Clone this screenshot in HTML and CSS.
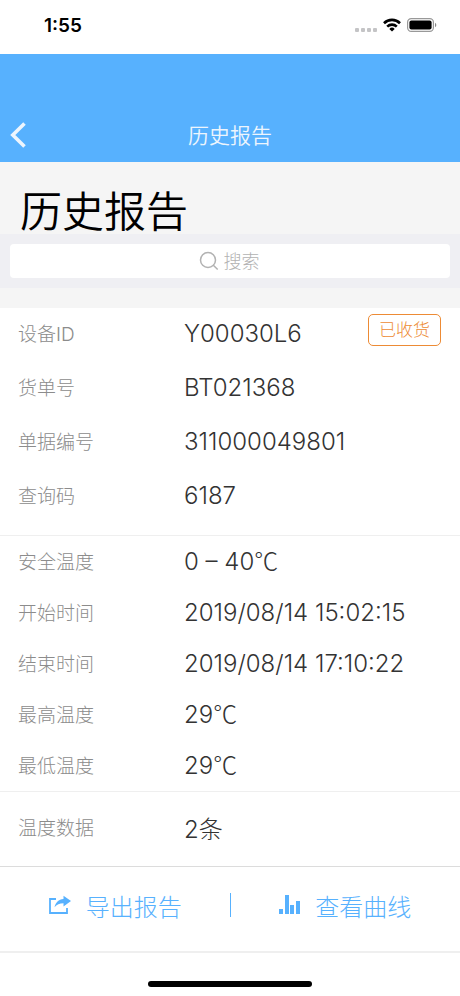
FILE: index.html
```
<!DOCTYPE html>
<html lang="zh-CN">
<head>
  <meta charset="UTF-8">
  <meta name="viewport" content="width=device-width, initial-scale=1.0">
  <link rel="stylesheet" href="styles.css">
  <title>历史报告</title>
</head>
<body>
  <div class="page">
    <div class="status-bar">
      <span class="time">1:55</span>
      <div class="status-icons">
        <svg width="22" height="16" viewBox="0 0 22 16" fill="#c4c4c6">
          <rect x="0" y="11" width="4" height="4" rx="1"/>
          <rect x="6" y="11" width="4" height="4" rx="1"/>
          <rect x="12" y="11" width="4" height="4" rx="1"/>
          <rect x="18" y="11" width="4" height="4" rx="1"/>
        </svg>
        <svg width="18" height="14" viewBox="0 0 18 14" fill="none" stroke="#000" stroke-width="2.6">
          <path d="M1 5.2a11.4 11.4 0 0 1 16 0"/>
          <path d="M4.2 8.6a6.9 6.9 0 0 1 9.6 0"/>
          <path d="M9 13.6L6.3 10.9a3.8 3.8 0 0 1 5.4 0z" fill="#000" stroke="none"/>
        </svg>
        <svg width="30" height="14" viewBox="0 0 30 14">
          <rect x=".6" y=".6" width="25.8" height="12.8" rx="3.6" fill="none" stroke="#999" stroke-width="1.2"/>
          <rect x="2.4" y="2.4" width="22.2" height="9.2" rx="2" fill="#000"/>
          <path d="M28 4.8c1.8.8 1.8 3.6 0 4.4z" fill="#888"/>
        </svg>
      </div>
    </div>

    <header class="nav-bar">
      <button type="button" class="back" aria-label="返回">
        <svg width="16" height="26" viewBox="0 0 16 26" fill="none" stroke="#edf5fd" stroke-width="3.6">
          <path d="M14.5 1.5L2.8 13l11.7 11.5"/>
        </svg>
      </button>
      <span class="nav-title">历史报告</span>
    </header>

    <main>
      <h1>历史报告</h1>

      <div class="search">
        <label class="search-box">
          <svg width="20" height="20" viewBox="0 0 20 20" fill="none" stroke="#b2b2b2" stroke-width="1.5">
            <circle cx="9" cy="9" r="7.5"/>
            <path d="M14.3 14.3l4.4 4.2"/>
          </svg>
          <input type="text" placeholder="搜索" aria-label="搜索">
        </label>
      </div>

      <section class="group device">
        <dl>
          <div class="item"><dt>设备ID</dt><dd>Y00030L6</dd></div>
          <div class="item"><dt>货单号</dt><dd>BT021368</dd></div>
          <div class="item"><dt>单据编号</dt><dd>311000049801</dd></div>
          <div class="item"><dt>查询码</dt><dd>6187</dd></div>
        </dl>
        <span class="tag">已收货</span>
      </section>

      <section class="group record">
        <dl>
          <div class="item"><dt>安全温度</dt><dd>0 – 40<span class="unit">℃</span></dd></div>
          <div class="item"><dt>开始时间</dt><dd>2019/08/14 15:02:15</dd></div>
          <div class="item"><dt>结束时间</dt><dd>2019/08/14 17:10:22</dd></div>
          <div class="item"><dt>最高温度</dt><dd>29<span class="unit">℃</span></dd></div>
          <div class="item"><dt>最低温度</dt><dd>29<span class="unit">℃</span></dd></div>
        </dl>
      </section>

      <section class="group total">
        <dl>
          <div class="item"><dt>温度数据</dt><dd>2条</dd></div>
        </dl>
      </section>
    </main>

    <div class="actions">
      <button type="button">
        <svg width="24" height="20" viewBox="0 0 24 20">
          <path d="M8 4H2v14h17v-5" fill="none" stroke="#57b1fe" stroke-width="1.8"/>
          <path d="M15.500 .8L23 6l-7.500 5.400V8.300C11.500 8.300 8.700 9.500 6.500 12.300 7.500 7.500 10.500 4.300 15.500 4z" fill="#57b1fe"/>
        </svg>
        导出报告
      </button>
      <span class="divider"></span>
      <button type="button">
        <svg width="22" height="20" viewBox="0 0 22 20" fill="#57b1fe">
          <rect x="0" y="14" width="4" height="5"/>
          <rect x="6" y="0" width="4" height="19"/>
          <rect x="11" y="10" width="4" height="9"/>
          <rect x="17" y="6" width="4" height="13"/>
        </svg>
        查看曲线
      </button>
    </div>

    <div class="home">
      <span class="home-bar"></span>
    </div>
  </div>
</body>
</html>
```

FILE: styles.css
```
* {
  margin: 0;
  padding: 0;
  box-sizing: border-box;
}

body {
  font-family: Inter, "Noto Sans CJK SC", sans-serif;
  font-weight: 300;
  color: #333;
  background-color: #fff;
}

button {
  border: 0;
  background: none;
  font: inherit;
  color: inherit;
}

svg {
  display: block;
  flex: none;
}

.page {
  min-height: 100vh;
  display: flex;
  flex-direction: column;
}

/* status bar */
.status-bar {
  height: 54px;
  padding: 0 23px 4px 44px;
  display: flex;
  align-items: center;
  justify-content: space-between;
}

.time {
  font-size: 19px;
  font-weight: 600;
  color: #000;
}

.status-icons {
  display: flex;
  align-items: center;
  gap: 6px;
}

/* nav */
.nav-bar {
  height: 108px;
  padding: 54px 10px 0;
  display: grid;
  grid-template-columns: 40px 1fr 40px;
  align-items: center;
  background-color: #57b1fe;
}

.nav-title {
  padding-bottom: 2px;
  text-align: center;
  font-size: 21px;
  font-weight: 350;
  color: #edf5fd;
}

h1 {
  height: 72px;
  padding: 20px 20px 0;
  font-size: 42px;
  line-height: 60px;
  font-weight: 350;
  color: #000;
  background-color: #f5f5f5;
}

/* search */
.search {
  padding: 10px;
  background-color: #efeff3;
}

.search-box {
  height: 34px;
  display: flex;
  align-items: center;
  justify-content: center;
  gap: 5px;
  border-radius: 4px;
  background-color: #fff;
}

.search-box input {
  width: 38px;
  border: 0;
  outline: 0;
  background: none;
  font: inherit;
  font-size: 18px;
}

.search-box input::placeholder {
  color: #b2b2b2;
}

/* report data */
.group {
  position: relative;
  border-bottom: 1px solid #efefef;
}

.item {
  height: 54px;
  padding: 0 18px 4px;
  display: flex;
  align-items: center;
}

dt {
  width: 166px;
  padding-bottom: 2px;
  font-size: 19px;
  color: #8c8c8c;
}

dd {
  font-size: 24px;
}

.unit {
  font-family: "Noto Sans CJK SC", sans-serif;
  line-height: 1;
}

.device {
  border-top: 20px solid #f5f5f5;
  padding-bottom: 11px;
}

.record .item {
  height: 51px;
  padding-bottom: 0;
}

.total {
  border-bottom-color: #dcdcdc;
}

.total .item {
  height: 74px;
}

.tag {
  position: absolute;
  top: 6px;
  right: 19px;
  padding: 0 10px;
  border: 1px solid #ed8b35;
  border-radius: 5px;
  font-size: 17px;
  line-height: 30px;
  color: #ed8b35;
}

/* bottom buttons */
.actions {
  height: 86px;
  padding-bottom: 8px;
  display: flex;
  align-items: center;
  border-bottom: 2px solid #efefef;
  color: #57b1fe;
}

.actions button {
  flex: 1;
  display: flex;
  align-items: center;
  justify-content: center;
  gap: 14px;
  font-size: 24px;
}

.divider {
  width: 1px;
  height: 24px;
  background-color: #57b1fe;
}

.home {
  flex: 1;
  display: flex;
  align-items: flex-end;
  justify-content: center;
  padding: 28px 0 9px;
}

.home-bar {
  width: 164px;
  height: 6px;
  border-radius: 3px;
  background-color: #000;
}
```
